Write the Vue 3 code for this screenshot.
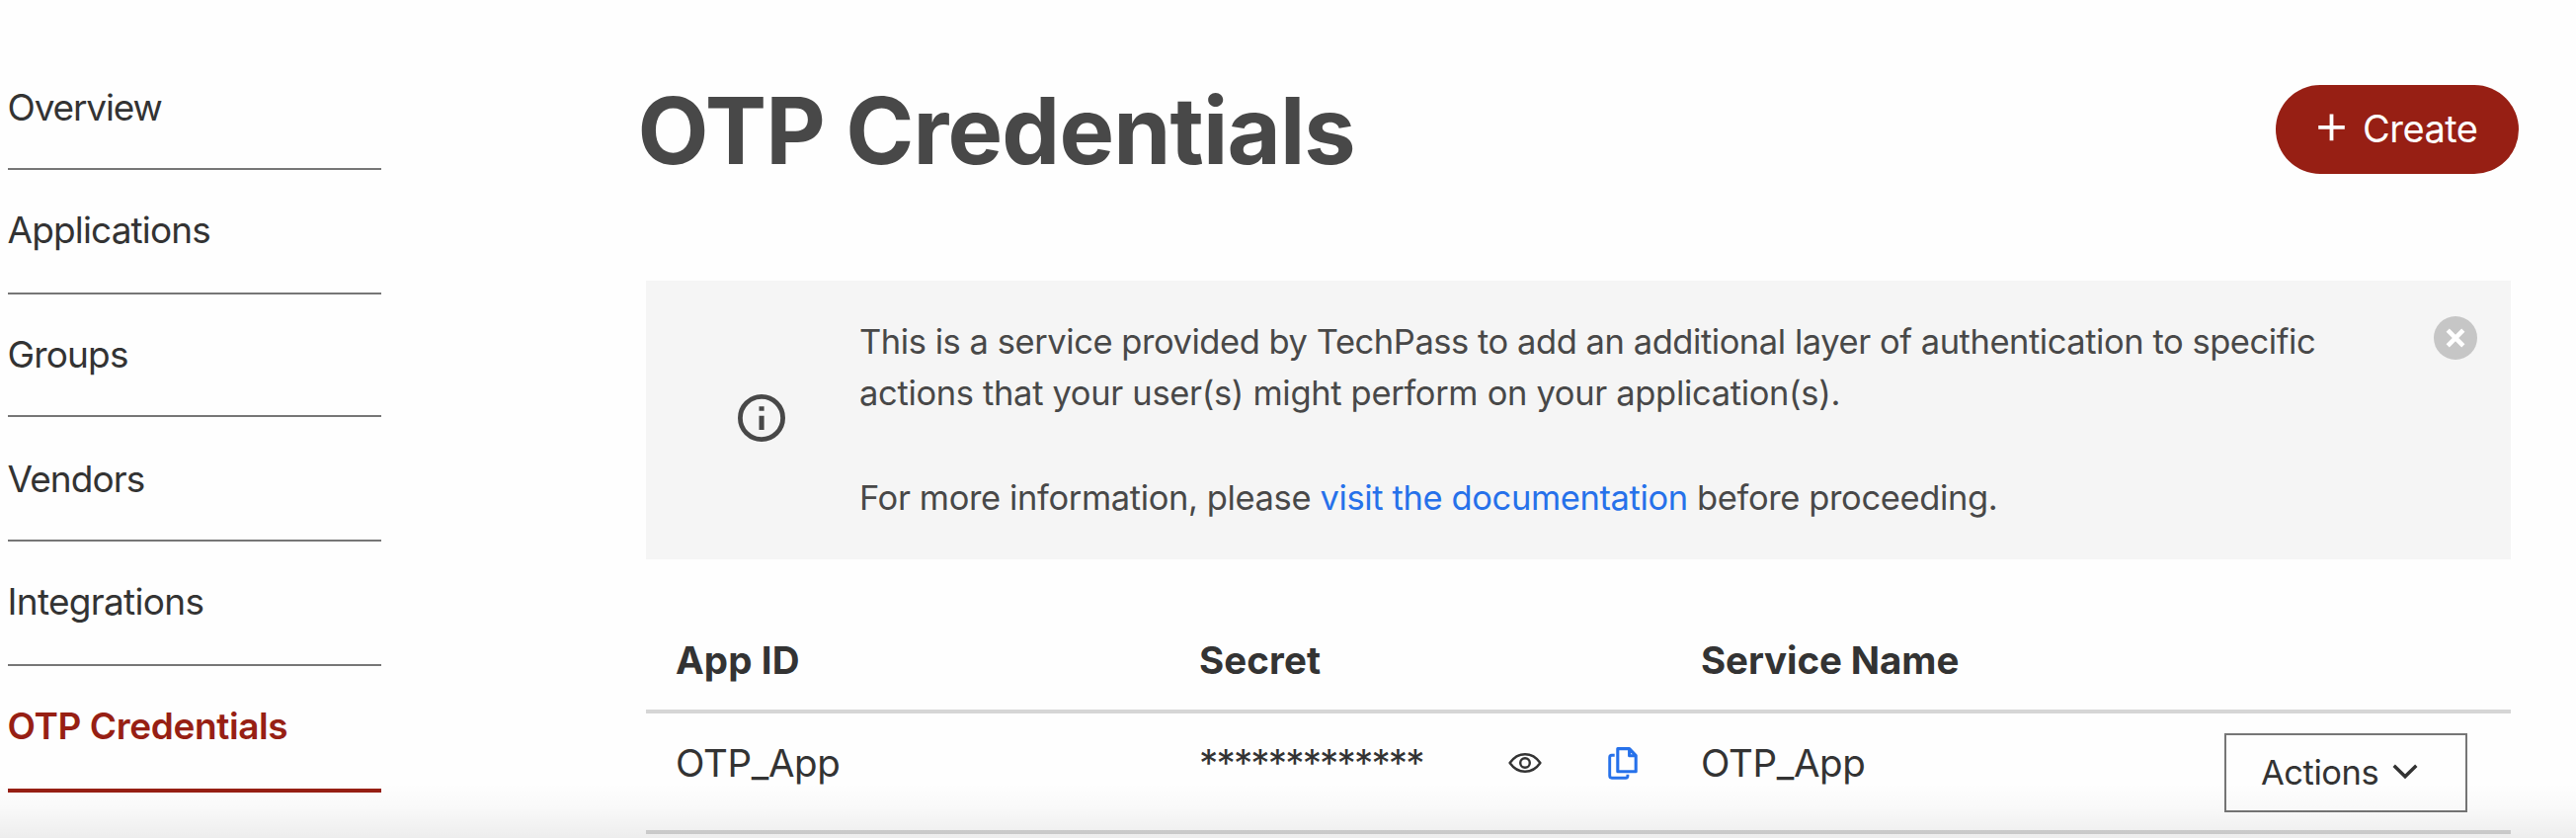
<script setup>
const navItems = [
  { label: 'Overview' },
  { label: 'Applications' },
  { label: 'Groups' },
  { label: 'Vendors' },
  { label: 'Integrations' },
  { label: 'OTP Credentials', active: true },
]
const rows = [{ appId: 'OTP_App', secret: '*************', service: 'OTP_App' }]
</script>

<template>
  <div class="page">
    <nav class="sidebar">
      <a v-for="item in navItems" :key="item.label" class="nav-item" :class="{ active: item.active }">
        <span>{{ item.label }}</span>
      </a>
    </nav>

    <main class="content">
      <header class="heading">
        <h1>OTP Credentials</h1>
        <button class="create">
          <svg width="28" height="28" viewBox="0 0 28 28"><path d="M13.500 .6v26.600M.2 13.900h26.600" fill="none" stroke="#fff" stroke-width="3.800" /></svg>
          <span>Create</span>
        </button>
      </header>

      <section class="notice">
        <svg class="info" width="48" height="48" viewBox="0 0 48 48">
          <circle cx="24" cy="24" r="21.600" fill="none" stroke="#484848" stroke-width="4.800" />
          <path d="M21.500 12.300h5.100v4.500h-5.100zM21.500 21.700h5.100V36h-5.100z" fill="#484848" />
        </svg>
        <div class="notice-text">
          <p><span class="l1">This is a service provided by TechPass to add an additional layer of authentication to specific</span><br /><span class="l2">actions that your user(s) might perform on your application(s).</span></p>
          <p class="more">For more information, please <a>visit the documentation</a> before proceeding.</p>
        </div>
        <svg class="close" width="44" height="44" viewBox="0 0 44 44">
          <circle cx="22" cy="22" r="22" fill="#c6c6c6" />
          <path d="M14.2 14.2l15.6 15.6M29.8 14.2L14.2 29.8" fill="none" stroke="#fff" stroke-width="4.6" />
        </svg>
      </section>

      <section class="table">
        <div class="row head">
          <span class="c-app">App ID</span>
          <span class="c-secret">Secret</span>
          <span class="c-service">Service Name</span>
        </div>
        <div v-for="row in rows" :key="row.appId" class="row body">
          <span class="c-app">{{ row.appId }}</span>
          <div class="secret-cell">
            <span class="stars">{{ row.secret }}</span>
            <svg class="eye" width="34" height="22" viewBox="0 0 34 22">
              <path d="M1.600 11C5.500 5.400 11 2.200 17 2.200S28.500 5.400 32.400 11C28.500 16.600 23 19.800 17 19.800S5.500 16.600 1.600 11Z" fill="none" stroke="#333" stroke-width="2.400" stroke-linejoin="round" />
              <circle cx="17" cy="11" r="4.800" fill="none" stroke="#333" stroke-width="2.400" />
            </svg>
            <svg class="copy" width="30" height="34" viewBox="0 0 30 34">
              <path d="M9.800 1.600H21.600L28.200 8.600V24.800H9.800ZM21.600 1.600V8.800H28.200" fill="none" stroke="#2671ea" stroke-width="3.100" stroke-linejoin="round" />
              <path d="M6.700 8.300H3.800Q1.700 8.300 1.700 10.400V29.100Q1.700 31.200 3.800 31.200H17.900Q19.900 31.200 19.900 29.200V27.700" fill="none" stroke="#2671ea" stroke-width="2.900" />
            </svg>
          </div>
          <span class="c-service">{{ row.service }}</span>
          <button class="actions">
            <span>Actions</span>
            <svg width="26" height="16" viewBox="0 0 26 16"><path d="M1.700 1.800L13 12.800L24.300 1.800" fill="none" stroke="#333" stroke-width="3.400" /></svg>
          </button>
        </div>
      </section>
    </main>
    <div class="fade"></div>
  </div>
</template>

<style>
body {
  margin: 0;
  background: #fefefe;
}
</style>

<style scoped>
.page {
  position: relative;
  display: flex;
  width: 2608px;
  height: 848px;
  overflow: hidden;
  box-sizing: border-box;
  background: #fefefe;
  color: #333;
  font-family: Inter, "Liberation Sans", sans-serif;
}
.sidebar {
  width: 378px;
  padding: 48px 0 0 8px;
}
.nav-item {
  display: block;
  box-sizing: border-box;
  height: 126px;
  padding-top: 39px;
  border-bottom: 2px solid #767676;
  font-size: 37px;
  line-height: 44px;
  letter-spacing: -0.850px;
}
.nav-item:nth-child(1) {
  letter-spacing: -1.150px;
}
.nav-item:nth-child(5) {
  letter-spacing: -0.700px;
}
.nav-item span {
  margin-left: -0.500px;
}
.nav-item:nth-child(1),
.nav-item:nth-child(3) {
  height: 124px;
}
.nav-item:nth-child(4) {
  padding-top: 41px;
  letter-spacing: -0.950px;
}
.nav-item.active {
  height: 128px;
  border-bottom: 4px solid #971f14;
  color: #971f14;
  font-weight: 600;
  letter-spacing: -0.380px;
}
.content {
  width: 1896px;
  margin-left: 268px;
  flex: none;
}
.heading {
  display: flex;
  justify-content: space-between;
  height: 284px;
  box-sizing: border-box;
  padding-top: 86px;
  margin-left: -9px;
}
h1 {
  margin: -10px 0 0 0.500px;
  font-size: 93.500px;
  line-height: 112px;
  font-weight: 700;
  letter-spacing: -0.860px;
  color: #484848;
  white-space: nowrap;
}
.create {
  display: flex;
  align-items: center;
  width: 246px;
  height: 90px;
  padding: 0 0 0 43px;
  border: 0;
  border-radius: 45px;
  background: #971f14;
  color: #fff;
  font: 400 38px/46px Inter, sans-serif;
  letter-spacing: -0.500px;
}
.create svg {
  margin-top: -5px;
}
.create span {
  margin: -2px 0 0 17px;
}
.notice {
  display: flex;
  width: 1888px;
  height: 282px;
  box-sizing: border-box;
  background: #f5f5f5;
  color: #484848;
  font-size: 34.500px;
}
.info {
  flex: none;
  margin: 115px 0 0 93px;
}
.notice-text {
  width: 1594px;
  margin: 36.400px 0 0 75px;
  line-height: 52px;
  letter-spacing: -0.380px;
  white-space: nowrap;
}
.notice-text .l1 {
  letter-spacing: -0.450px;
}
.notice-text .l2 {
  letter-spacing: -0.330px;
}
.notice-text p {
  margin: 0;
}
.notice-text .more {
  margin-top: 54px;
}
.notice-text a {
  color: #2671ea;
}
.close {
  flex: none;
  margin-top: 36px;
}
.table {
  width: 1888px;
  font-size: 38.500px;
  line-height: 46px;
}
.row {
  display: grid;
  grid-template-columns: 530px 508px 560px 246px;
  box-sizing: border-box;
  border-bottom: 4px solid #d6d6d6;
}
.row.head {
  height: 156px;
  padding-top: 79px;
  font-weight: 700;
  letter-spacing: 0.100px;
}
.row.head .c-service {
  letter-spacing: -0.100px;
}
.row.body {
  height: 122px;
  padding-top: 20px;
  letter-spacing: -0.350px;
}
.c-app,
.c-secret,
.c-service {
  padding-left: 30px;
}
.body .c-app,
.body .c-service {
  padding-top: 7px;
}
.secret-cell {
  display: flex;
  padding: 7px 0 0 30px;
}
.stars {
  width: 313px;
  letter-spacing: -1.850px;
}
.eye {
  margin-top: 12px;
}
.copy {
  margin: 7px 0 0 67px;
}
.actions {
  display: flex;
  align-items: center;
  box-sizing: border-box;
  width: 246px;
  height: 80px;
  padding: 0 0 0 35px;
  border: 2px solid #767676;
  background: transparent;
  color: #333;
  font: 400 34.500px/42px Inter, sans-serif;
  letter-spacing: -0.450px;
}
.actions span {
  width: 119px;
  margin-top: -1px;
  text-align: left;
}
.actions svg {
  margin: -3px 0 0 14px;
}
.fade {
  position: absolute;
  left: 0;
  right: 0;
  bottom: 0;
  height: 56px;
  background: linear-gradient(to bottom, rgba(0, 0, 0, 0), rgba(0, 0, 0, 0.020) 45%, rgba(0, 0, 0, 0.065));
}
</style>
